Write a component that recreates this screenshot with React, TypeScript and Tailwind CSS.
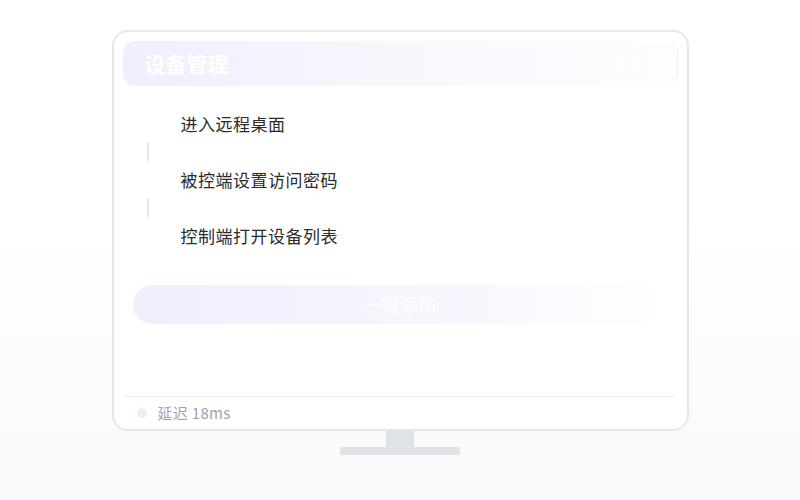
export default function App() {
    const steps = ['进入远程桌面', '被控端设置访问密码', '控制端打开设备列表'];

    return (
        <div
            className="w-[800px] h-[500px] overflow-hidden bg-gradient-to-b from-white from-45% to-[#f9f9fb] pt-[30px]"
            style={{ fontFamily: '"Noto Sans CJK SC", "Noto Sans", sans-serif' }}
        >
            {/* Monitor screen */}
            <div className="mx-auto w-[577px] h-[401px] rounded-[16px] border-2 border-[#e4e7eb] bg-white flex flex-col px-[9px] pt-[9px]">
                {/* Header bar */}
                <div className="h-[45px] rounded-xl bg-gradient-to-r from-[#f1eefd] via-[#f8f7fe] to-[#fdfdfe] flex items-center pl-[22px]">
                    <span className="text-[21px] font-bold text-white leading-none">设备管理</span>
                    <div className="ml-auto flex items-center gap-[10px] mr-[20px]">
                        <span className="w-[7px] h-[10px] rounded-sm bg-white" />
                        <span className="w-[7px] h-[10px] rounded-sm bg-white" />
                        <span className="w-[8px] h-[10px] rounded-sm bg-white" />
                    </div>
                    <div className="w-px h-[27px] bg-[#eceef2]" />
                </div>

                {/* Steps */}
                <div className="mt-[26px] flex flex-col">
                    {steps.map((s, i) => (
                        <div key={s}>
                            {i > 0 && (
                                <div className="h-[32px] pl-[24px] pt-[6px]">
                                    <div className="w-[2px] h-[19px] bg-[#e5e7eb]" />
                                </div>
                            )}
                            <div className="h-[24px] pl-[58px] flex items-center text-[17px] tracking-[0.5px] text-[#2b2b2b]">{s}</div>
                        </div>
                    ))}
                </div>

                {/* One-click add */}
                <button className="mt-[37px] ml-[10px] w-[535px] h-[39px] rounded-full bg-gradient-to-r from-[#f1edfd] via-[#f8f6fe] via-60% to-white text-white text-[18px] flex items-center justify-center">
                    一键添加
                </button>

                {/* Footer */}
                <div className="mt-auto h-[33px] border-t border-[#eef0f3] flex items-center pl-[14px] gap-[11px] mr-[2px]">
                    <span className="w-[10px] h-[10px] rounded-full bg-[#efebfd]" />
                    <span className="text-[15px] tracking-[0.3px] text-[#9ca3af]">延迟 18ms</span>
                </div>
            </div>

            {/* Stand */}
            <div className="mx-auto w-[28px] h-[16px] bg-[#dfe3e8]" />
            <div className="mx-auto w-[120px] h-[8px] bg-[#dfe3e8]" />
        </div>
    );
}
